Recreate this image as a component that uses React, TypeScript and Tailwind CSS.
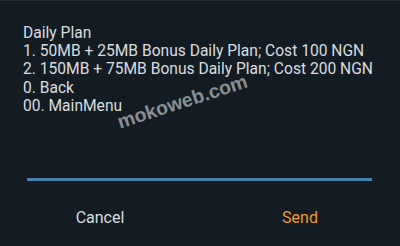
import React from "react";

export default function App() {
  const lines = [
    "Daily Plan",
    "1. 50MB + 25MB Bonus Daily Plan; Cost 100 NGN",
    "2. 150MB + 75MB Bonus Daily Plan; Cost 200 NGN",
    "0. Back",
    "00. MainMenu",
  ];
  return (
    <div
      className="relative w-[400px] h-[246px] overflow-hidden bg-[#131c22] border-t border-[#1f2a31] flex flex-col"
      style={{ fontFamily: "Roboto, 'Noto Sans', sans-serif" }}
    >
      <div className="pt-[23px] pl-[23px] text-[15.6px] leading-[18.2px] text-[#d9dde0] whitespace-nowrap">
        {lines.map((l) => (
          <div key={l}>{l}</div>
        ))}
      </div>
      <div className="mt-[63px] ml-[27px] w-[345px] h-[3px] bg-[#4682ad]" />
      <div className="mt-[25px] flex text-[16px] leading-[24px]">
        <div className="w-1/2 text-center text-[#d9dde0]">Cancel</div>
        <div className="w-1/2 text-center text-[#f09a32]">Send</div>
      </div>
      <div
        className="absolute left-[118px] top-[107px] text-[19.5px] font-bold text-[#8a8e92] whitespace-nowrap origin-left -rotate-[18deg]"
        style={{ fontFamily: "'Liberation Sans', Arial, sans-serif" }}
      >
        mokoweb.com
      </div>
    </div>
  );
}
